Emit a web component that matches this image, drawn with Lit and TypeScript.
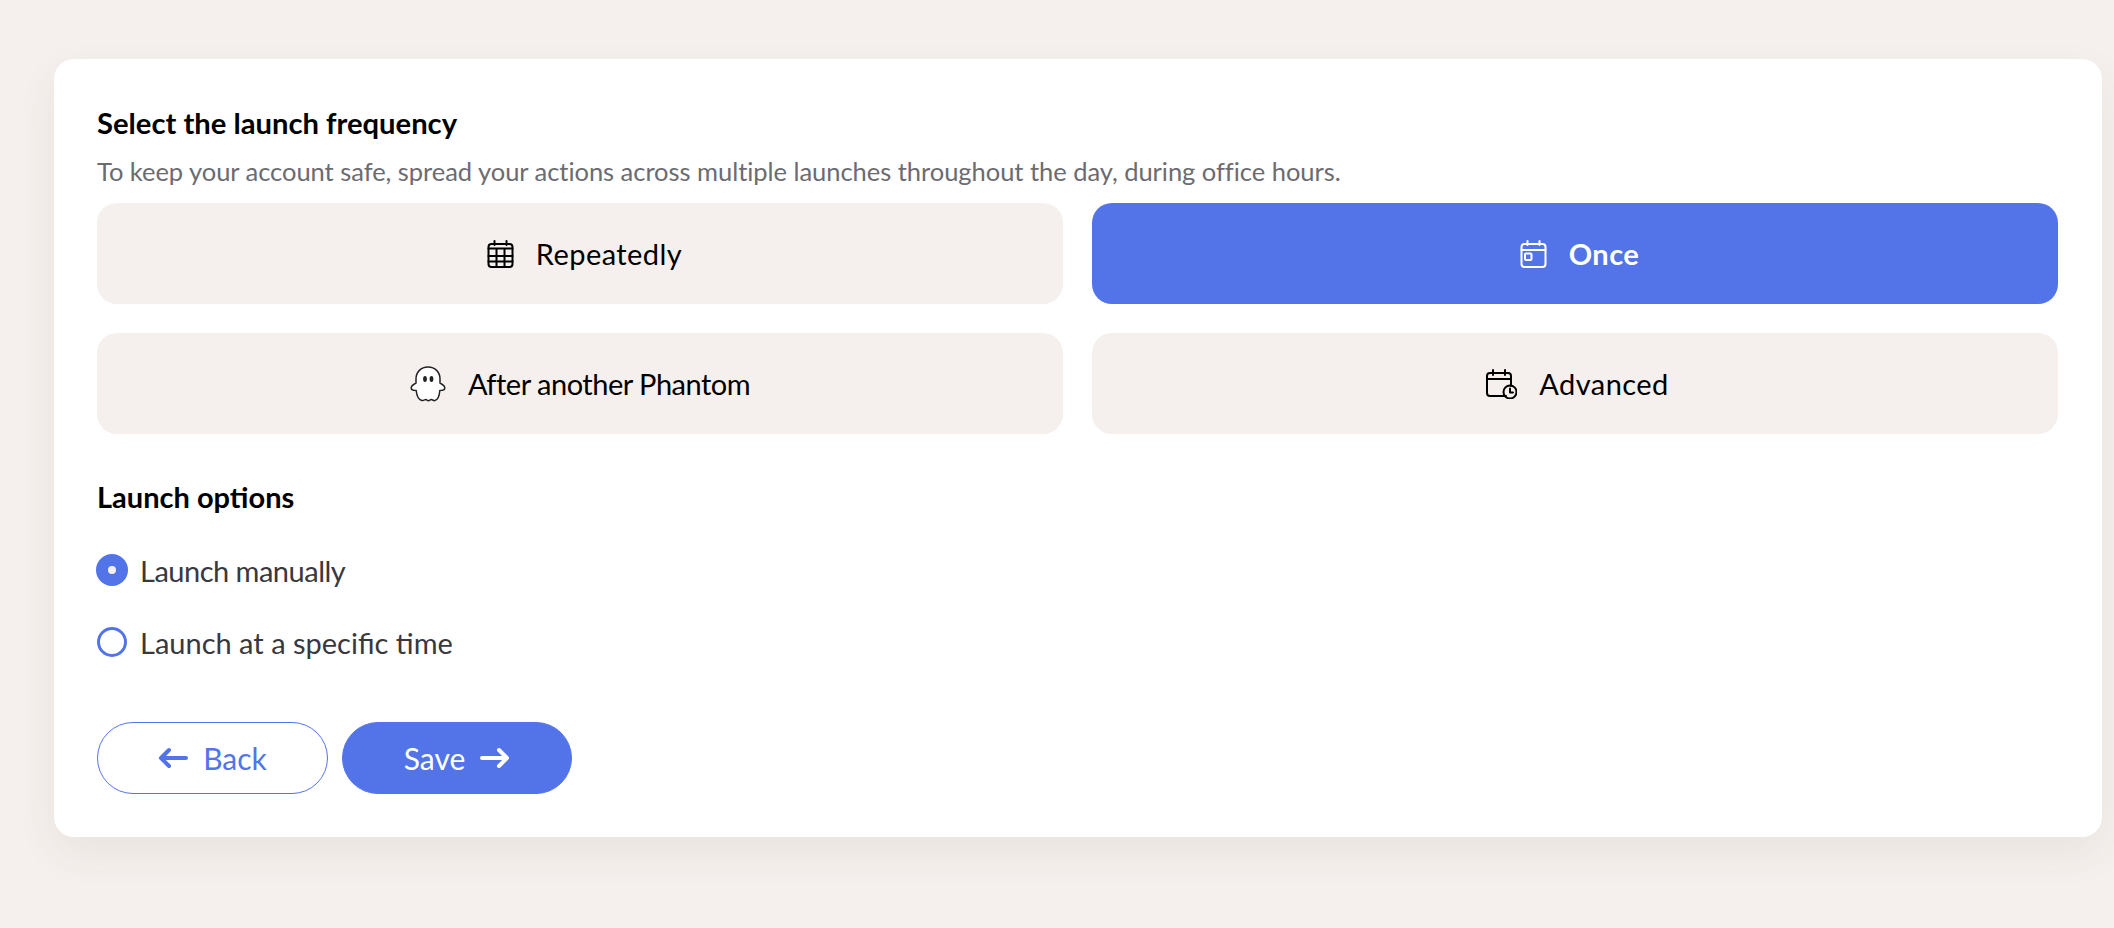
import { css, html, LitElement, svg } from "lit";
import { customElement } from "lit/decorators.js";

const calendarGrid = svg`
  <rect x="1.5" y="4" width="24" height="23" rx="3" />
  <path d="M7.5 1v4M19.5 1v4M1.5 8.500h24M1.500 16h24M1.500 21.500h24M9.500 8.500V27M17.500 8.500V27" />
`;
const calendarOnce = svg`
  <rect x="1.5" y="4" width="24" height="23" rx="3" />
  <path d="M7.5 1v4M19.5 1v4M1.5 10h24" />
  <rect x="5" y="13.5" width="6.5" height="6.5" rx="1" />
`;
const ghost = svg`
  <path
    class="ghost"
    d="M18 1C11 1 6 6 6 13V17C3.800 18.200 1.200 20 1.200 22C1.200 23.800 3.500 24.500 6.200 24.500C6.700 29.500 8.700 33.500 11.700 34.500C13.900 34.900 14.700 33.500 15.700 33.500C16.700 33.500 17.300 34.800 18.300 34.800C19.300 34.800 20.300 33.500 21.300 33.500C22.300 33.500 23.500 34.900 24.800 34.600C27.800 34 29.400 29.700 29.800 24.500C32.500 24.500 34.800 23.800 34.800 22C34.800 20 32.200 18.200 30 17V13C30 6 25 1 18 1Z"
  />
  <ellipse class="eye" cx="15" cy="13" rx="1.900" ry="2.900" />
  <ellipse class="eye" cx="21.500" cy="13" rx="1.900" ry="2.900" />
`;
const calendarClock = svg`
  <path d="M21 27H5a3 3 0 0 1-3-3V7a3 3 0 0 1 3-3h18a3 3 0 0 1 3 3v10" />
  <path d="M8 1v5M20 1v5M2 10h24" />
  <circle cx="25" cy="23" r="6.500" />
  <path d="M25 19.500v4h3" />
`;

@customElement("app-root")
export class AppRoot extends LitElement {
  static styles = css`
    * {
      box-sizing: border-box;
    }

    :host {
      display: block;
      box-sizing: border-box;
      height: 928px;
      padding: 59px 12px 0 54px;
      background: #f5f0ed;
      font-family: "Lato", "Liberation Sans", sans-serif;
      color: #000;
    }

    .card {
      height: 778px;
      padding: 46px 43px 42px;
      border-radius: 20px;
      background: #fff;
      box-shadow: 0 16px 40px rgba(90, 70, 60, 0.07);
    }

    h2 {
      margin: 0;
      font-size: 29.2px;
      line-height: 36px;
      font-weight: 700;
    }

    .hint {
      margin: 15px 0 0;
      font-size: 25.5px;
      line-height: 30px;
      letter-spacing: -0.036px;
      color: #6b6b70;
    }

    .choices {
      display: grid;
      grid-template-columns: 966px 966px;
      gap: 29px;
      margin-top: 17px;
    }

    .choice {
      display: flex;
      height: 101px;
      align-items: center;
      justify-content: center;
      gap: 22px;
      border-radius: 20px;
      background: #f5f0ed;
      font-size: 29px;
    }

    .choice.active {
      background: #5274e8;
      color: #fff;
      font-weight: 700;
    }

    .choice svg {
      fill: none;
      stroke: currentColor;
      stroke-width: 2;
      stroke-linecap: round;
      stroke-linejoin: round;
    }

    .choice svg.calendar {
      margin-left: 9px;
    }

    .choice svg.clock {
      margin-left: 4px;
    }

    .choice .ghost {
      fill: #fff;
      stroke: #222;
      stroke-width: 1.5;
    }

    .choice .eye {
      fill: #222;
      stroke: none;
    }

    .wide {
      letter-spacing: 0.45px;
    }

    .tight {
      letter-spacing: -0.5px;
    }

    h3 {
      margin: 45px 0 0;
      font-size: 29px;
      line-height: 36px;
      font-weight: 700;
    }

    .options {
      display: flex;
      flex-direction: column;
      gap: 36px;
      margin-top: 37px;
    }

    .option {
      display: flex;
      align-items: center;
      gap: 13px;
      height: 36px;
      font-size: 29px;
      color: #38383d;
    }

    .radio {
      width: 30px;
      height: 30px;
      border: 3px solid #5274e8;
      border-radius: 50%;
    }

    .radio.on {
      border-width: 11px;
      background: #f5f0ed;
      box-shadow: 0 0 0 1px #5274e8;
    }

    .actions {
      display: flex;
      gap: 14px;
      margin-top: 62px;
    }

    .btn {
      display: flex;
      width: 231px;
      height: 72px;
      align-items: center;
      justify-content: center;
      gap: 15px;
      border: 1px solid #5274e8;
      border-radius: 36px;
      font-size: 30px;
      color: #5274e8;
    }

    .btn.primary {
      width: 230px;
      background: #5274e8;
      color: #fff;
    }

    .btn svg {
      fill: none;
      stroke: currentColor;
      stroke-width: 4;
      stroke-linecap: round;
      stroke-linejoin: round;
    }
  `;

  render() {
    return html`
      <div class="card">
        <h2>Select the launch frequency</h2>
        <p class="hint">
          To keep your account safe, spread your actions across multiple
          launches throughout the day, during office hours.
        </p>
        <div class="choices">
          <div class="choice">
            <svg class="calendar" width="27" height="28" viewBox="0 0 27 28">${calendarGrid}</svg>
            <span class="wide">Repeatedly</span>
          </div>
          <div class="choice active">
            <svg class="calendar" width="27" height="28" viewBox="0 0 27 28">${calendarOnce}</svg>
            <span class="wide">Once</span>
          </div>
          <div class="choice">
            <svg width="36" height="36" viewBox="0 0 36 36">${ghost}</svg>
            <span class="tight">After another Phantom</span>
          </div>
          <div class="choice">
            <svg class="clock" width="32" height="30" viewBox="0 0 32 30">${calendarClock}</svg>
            <span class="wide">Advanced</span>
          </div>
        </div>

        <h3>Launch options</h3>
        <div class="options">
          <div class="option">
            <span class="radio on"></span><span class="tight">Launch manually</span>
          </div>
          <div class="option">
            <span class="radio"></span><span>Launch at a specific time</span>
          </div>
        </div>

        <div class="actions">
          <div class="btn">
            <svg width="30" height="22" viewBox="0 0 30 22"><path d="M28 11H3M11 3l-8 8 8 8" /></svg>
            Back
          </div>
          <div class="btn primary">
            Save
            <svg width="30" height="22" viewBox="0 0 30 22"><path d="M2 11h25M19 3l8 8-8 8" /></svg>
          </div>
        </div>
      </div>
    `;
  }
}
